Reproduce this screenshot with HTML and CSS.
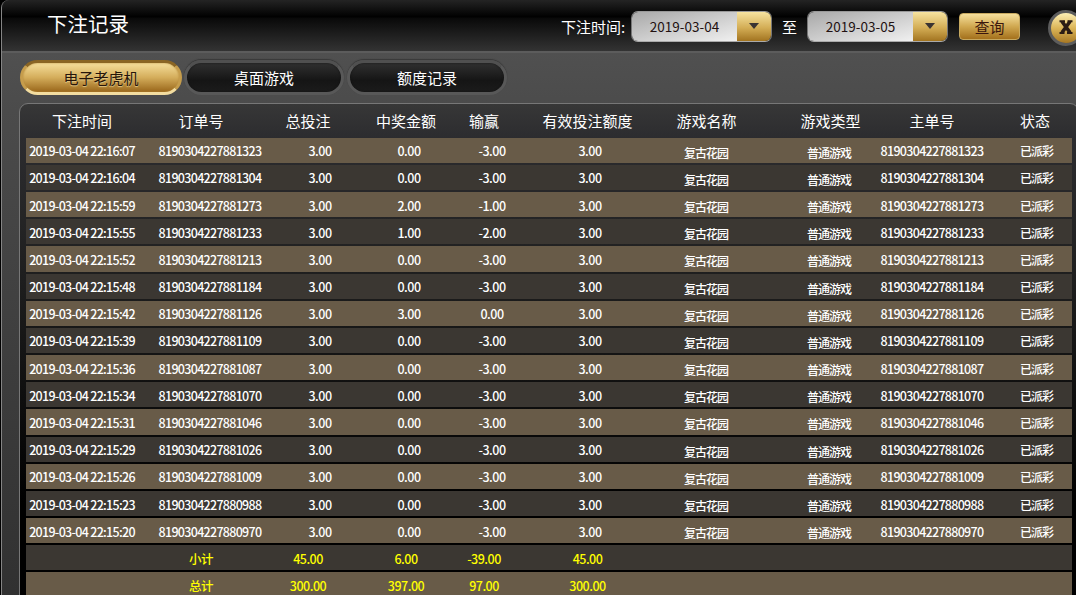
FILE: index.html
```html
<!DOCTYPE html>
<html lang="zh-CN">

<head>
	<meta charset="UTF-8">
	<title>下注记录</title>
	<meta name="viewport" content="width=device-width">
	<link rel="stylesheet" href="styles.css">
</head>

<body>
	<div class="window">
		<header class="topbar">
			<h1>下注记录</h1>
			<form action="#" class="filter">
				<label>下注时间:</label>
				<div class="date">
					<span class="date-value">2019-03-04</span>
					<span class="date-arrow"><svg width="12" height="8" viewBox="0 0 12 8"><path d="M1 1h10L6 7z" /></svg></span>
				</div>
				<span class="to">至</span>
				<div class="date">
					<span class="date-value">2019-03-05</span>
					<span class="date-arrow"><svg width="12" height="8" viewBox="0 0 12 8"><path d="M1 1h10L6 7z" /></svg></span>
				</div>
				<button type="button" class="search">查询</button>
			</form>
			<button type="button" class="close" aria-label="关闭">
				<svg width="18" height="18" viewBox="0 0 18 18"><path class="serif" d="M2.5 3.2h5.5M10.5 3.2h5M2.5 15h5M10 15h5.5" /><path d="M5 3.5l8 11M13 3.5l-8 11" /></svg>
			</button>
		</header>
		<nav class="tabs">
			<a class="tab active">电子老虎机</a>
			<a class="tab">桌面游戏</a>
			<a class="tab">额度记录</a>
		</nav>
		<main class="panel">
			<div class="row head">
				<span>下注时间</span>
				<span>订单号</span>
				<span>总投注</span>
				<span>中奖金额</span>
				<span>输赢</span>
				<span>有效投注额度</span>
				<span>游戏名称</span>
				<span>游戏类型</span>
				<span>主单号</span>
				<span>状态</span>
			</div>
			<div class="rows" id="rows"></div>
		</main>
	</div>
	<script>
		document.addEventListener('DOMContentLoaded', () => {
			// time, last 4 digits of the order number, win amount, profit
			let bets = [
				['22:16:07', '1323', '0.00', '-3.00'],
				['22:16:04', '1304', '0.00', '-3.00'],
				['22:15:59', '1273', '2.00', '-1.00'],
				['22:15:55', '1233', '1.00', '-2.00'],
				['22:15:52', '1213', '0.00', '-3.00'],
				['22:15:48', '1184', '0.00', '-3.00'],
				['22:15:42', '1126', '3.00', '0.00'],
				['22:15:39', '1109', '0.00', '-3.00'],
				['22:15:36', '1087', '0.00', '-3.00'],
				['22:15:34', '1070', '0.00', '-3.00'],
				['22:15:31', '1046', '0.00', '-3.00'],
				['22:15:29', '1026', '0.00', '-3.00'],
				['22:15:26', '1009', '0.00', '-3.00'],
				['22:15:23', '0988', '0.00', '-3.00'],
				['22:15:20', '0970', '0.00', '-3.00']
			];
			let totals = [
				['', '小计', '45.00', '6.00', '-39.00', '45.00', '', '', '', ''],
				['', '总计', '300.00', '397.00', '97.00', '300.00', '', '', '', '']
			];
			let box = document.querySelector('#rows');

			function addRow(cells, type) {
				let row = document.createElement('div');
				row.className = `row ${type}`;
				row.innerHTML = cells.map(c => `<span>${c}</span>`).join('');
				box.append(row);
			}

			bets.forEach(([time, id, win, profit]) => {
				let order = `819030422788${id}`;
				addRow([`2019-03-04 ${time}`, order, '3.00', win, profit, '3.00', '复古花园', '普通游戏', order, '已派彩'], 'bet');
			});
			totals.forEach(t => addRow(t, 'total'));
		});
	</script>
</body>

</html>
```
FILE: styles.css
```css
* {
	box-sizing: border-box;
}

body {
	margin: 0;
	height: 595px;
	overflow: hidden;
	background: #000;
	color: #fff;
	font-family: "Noto Sans CJK SC", sans-serif;
}

.window {
	width: 1100px;
	height: 610px;
	margin-left: 1px;
	border: 1px solid #858585;
	border-width: 0 0 0 1px;
	border-radius: 8px 0 0 0;
	background: linear-gradient(#505050 52px, #4b4b4b 110px, #303030);
	overflow: hidden;
}

.topbar {
	display: flex;
	align-items: center;
	height: 53px;
	padding-left: 45px;
	border-bottom: 2px solid #5c5c5c;
	background: linear-gradient(#242424, #020202 16px, #000 17px, #090909 18px, #333 51px);
}

.topbar h1 {
	width: 513px;
	margin: 0 0 5px;
	font-size: 20.5px;
	font-weight: 400;
	line-height: 30px;
}

.filter {
	display: flex;
	align-items: center;
	padding-top: 2px;
	font-size: 15px;
}

.filter label {
	width: 71px;
	padding-left: 1px;
	line-height: 22px;
	white-space: nowrap;
}

.date {
	display: flex;
	width: 141px;
	height: 31px;
	border: 1px solid #aaa;
	border-color: #999 #777 #aaa;
	border-radius: 7px;
	overflow: hidden;
	color: #211;
}

.date-value {
	width: 105px;
	background: linear-gradient(165deg, #a8a8a8, #ccc 50%, #f0f0f0);
	font-size: 13.5px;
	line-height: 29px;
	text-align: center;
}

.date-arrow {
	display: flex;
	flex: 1;
	align-items: center;
	justify-content: center;
	padding-bottom: 2px;
	background: linear-gradient(#f6e3a0, #d3ad55 55%, #a27420);
	fill: #3a3433;
}

.to {
	width: 35px;
	text-align: center;
}

.search {
	width: 61px;
	height: 27px;
	margin-left: 11px;
	padding: 0;
	border: 1px solid #c7a960;
	border-radius: 4px;
	background: linear-gradient(#f5df9c, #d0a850 50%, #a4701c);
	color: #3b160d;
	font: 15px/24px "Noto Sans CJK SC", sans-serif;
}

.close {
	display: flex;
	flex: none;
	align-items: center;
	justify-content: center;
	width: 36px;
	height: 36px;
	margin: 4px 0 0 28px;
	padding: 0;
	border: 3px solid #5c5c5c;
	border-radius: 50%;
	background: linear-gradient(#fcefb5, #dcb659 50%, #a87823);
}

.close svg {
	flex: none;
	margin-bottom: 2px;
	fill: none;
	stroke: #2b1c15;
	stroke-width: 3.6;
}

.close .serif {
	stroke-width: 2;
}

.tabs {
	display: flex;
	gap: 2px;
	padding: 7px 0 0 18px;
}

.tab {
	width: 162px;
	height: 35px;
	border: 3px solid #585858;
	border-top-color: #505050;
	border-radius: 18px;
	background: linear-gradient(#303030, #151515 60%, #1b1b1b);
	box-shadow: inset 0 0 2px #111, 0 -1px 1px #383838;
	font-size: 15px;
	line-height: 29px;
	text-align: center;
}

.tab.active {
	border-color: #8a6524 #c69d4c #f3dda0;
	background: linear-gradient(#f6df9c, #d4ad5b 50%, #99661a);
	box-shadow: inset 0 0 2px #b58a3c;
	color: #26150a;
	text-shadow: 0 1px 1px #e5c986;
}

.tab:not(.active) {
	width: 160px;
}

.tab:last-child {
	margin-left: 1px;
}

.panel {
	width: 1060px;
	height: 520px;
	margin: 8px 0 0 17px;
	padding-left: 6px;
	border: 1px solid #777;
	border-radius: 9px;
	background: linear-gradient(#373737, #2c2c2f 34px, #202020 160px, #000 400px);
}

.row {
	display: grid;
	grid-template-columns: 112px 126px 88px 104px 56px 128px 128px 112px 110px 82px;
	align-items: center;
	width: 1046px;
	height: 25.18px;
	font-size: 12.5px;
	font-weight: 500;
	letter-spacing: -0.7px;
	white-space: nowrap;
}

.row span {
	display: flex;
	justify-content: center;
}

.row.head {
	height: 33.7px;
	font-size: 15px;
	font-weight: 400;
	letter-spacing: 0;
}

.rows {
	display: grid;
	gap: 2px;
}

.rows .row {
	padding-top: 1px;
	background: #3b3732;
}

.rows .row:nth-child(odd) {
	background: #685b48;
}

/* values don't sit right under the column titles */
.row span:nth-child(4) { padding-left: 4px; }
.row span:nth-child(6) { padding-left: 23px; }
.row span:nth-child(7) { padding-left: 5px; }
.row span:nth-child(8) { padding-left: 13px; }
.row span:nth-child(9) { padding-right: 6px; }
.row span:nth-child(10) { padding-left: 8px; }

.bet span:nth-child(2) { padding-left: 18px; }
.bet span:nth-child(3) { padding-left: 24px; }
.bet span:nth-child(4) { padding-left: 10px; }
.bet span:nth-child(5) { padding-left: 16px; }
.bet span:nth-child(6) { padding-left: 28px; }
.bet span:nth-child(7) { padding-left: 4px; }
.bet span:nth-child(8) { padding-left: 10px; }
.bet span:nth-child(10) { padding-left: 11px; }

.bet span:nth-child(n+3):nth-child(-n+6) {
	letter-spacing: -0.5px;
}

.bet span:nth-child(7),
.bet span:nth-child(8) {
	padding-top: 3px;
	font-size: 12px;
	letter-spacing: -1px;
}

.bet span:nth-child(10) {
	font-size: 12px;
	letter-spacing: -1px;
}

.total {
	color: #ff0;
	letter-spacing: -0.5px;
}
```
